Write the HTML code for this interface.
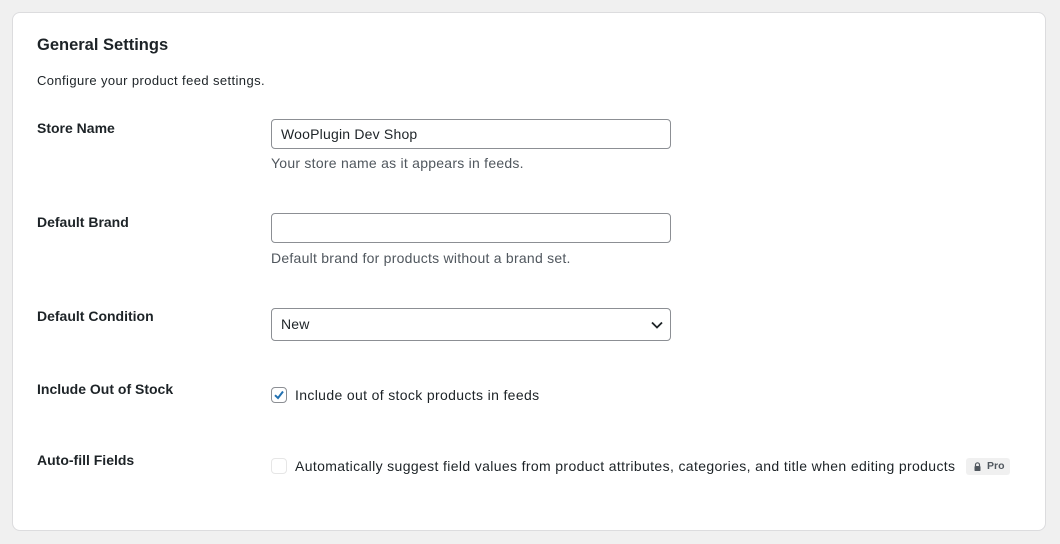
<!DOCTYPE html>
<html><head><style>
body{margin:0;background:#f0f0f0;font-family:"Liberation Sans",sans-serif;color:#1d2327;width:1060px;height:544px;position:relative;overflow:hidden}
.card{position:absolute;left:12px;top:12px;width:1032px;height:517px;background:#fff;border:1px solid #dcdcde;border-radius:8px}
.a{position:absolute;white-space:nowrap}
h2{position:absolute;left:37px;top:36px;margin:0;font-size:16.5px;font-weight:bold}
.lbl{font-size:14px;font-weight:bold;left:37px}
.inp{position:absolute;left:271px;width:400px;border:1px solid #8c8f94;border-radius:4px;background:#fff;box-sizing:border-box;font-size:14px;padding-left:9px;letter-spacing:0.2px}
.help{font-size:14px;color:#50575e;left:271px;letter-spacing:0.25px}
.cb{position:absolute;left:271px;width:16px;height:16px;box-sizing:border-box;border-radius:4px}
</style></head><body>
<div class="card"></div>
<h2>General Settings</h2>
<div class="a" style="left:37px;top:73px;font-size:13px;letter-spacing:0.4px">Configure your product feed settings.</div>
<div class="a lbl" style="top:120px">Store Name</div>
<div class="inp" style="top:119px;height:30px;line-height:28px">WooPlugin Dev Shop</div>
<div class="a help" style="top:155px">Your store name as it appears in feeds.</div>
<div class="a lbl" style="top:214px">Default Brand</div>
<div class="inp" style="top:213px;height:30px"></div>
<div class="a help" style="top:250px">Default brand for products without a brand set.</div>
<div class="a lbl" style="top:308px">Default Condition</div>
<div class="inp" style="top:308px;height:33px;line-height:31px">New
<svg style="position:absolute;right:7px;top:11px" width="12" height="10" viewBox="0 0 12 10"><path d="M1 2.5L6 7.5 11 2.5" fill="none" stroke="#1d2327" stroke-width="1.8"/></svg></div>
<div class="a lbl" style="top:381px">Include Out of Stock</div>
<div class="cb" style="top:387px;border:1px solid #8c8f94;background:#fff"><svg width="14" height="14" viewBox="0 0 14 14" style="position:absolute;left:0;top:0"><path d="M3 7.2L6 10 11 3.5" fill="none" stroke="#2271b1" stroke-width="2"/></svg></div>
<div class="a" style="left:295px;top:387px;font-size:14px;letter-spacing:0.35px">Include out of stock products in feeds</div>
<div class="a lbl" style="top:452px">Auto-fill Fields</div>
<div class="cb" style="top:458px;border:1px solid #e6e6e6;background:#fff"></div>
<div class="a" style="left:295px;top:458px;font-size:14px;letter-spacing:0.36px">Automatically suggest field values from product attributes, categories, and title when editing products</div>
<div class="a" style="left:966px;top:458px;width:44px;height:17px;background:#f0f0f0;border-radius:3px;font-size:10.5px;font-weight:bold;color:#50575e;line-height:17px">
<svg style="position:absolute;left:8px;top:4px" width="7" height="9" viewBox="0 0 7 9"><path d="M1.5 4V2.8a2 2 0 0 1 4 0V4" fill="none" stroke="#50575e" stroke-width="1.2"/><rect x="0.5" y="4" width="6" height="5" rx="0.8" fill="#50575e"/></svg>
<span style="position:absolute;left:21px">Pro</span></div>
</body></html>
